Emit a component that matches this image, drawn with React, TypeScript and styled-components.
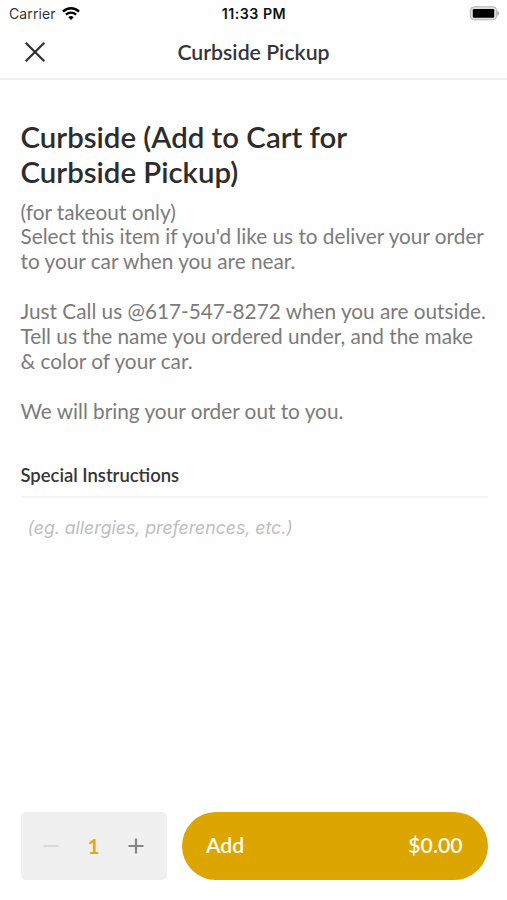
import React, { useState } from "react";
import styled, { createGlobalStyle } from "styled-components";

const GlobalStyle = createGlobalStyle`
  *, *::before, *::after { box-sizing: border-box; }
  body { margin: 0; background: #fff; font-family: Lato, "Liberation Sans", sans-serif; }
  button, textarea { font: inherit; border: 0; padding: 0; margin: 0; background: none; }
`;

const Screen = styled.div`
  width: 100%;
  height: 100vh;
  display: flex;
  flex-direction: column;
  background: #fefefe;
  overflow: hidden;
`;

const StatusBar = styled.div`
  height: 27px;
  flex: none;
  display: grid;
  grid-template-columns: 1fr auto 1fr;
  align-items: center;
  padding: 0 7px 0 9px;
  font-family: Inter, sans-serif;
  color: #111;
`;

const Carrier = styled.div`
  display: flex;
  align-items: center;
  gap: 6px;
  font-size: 14px;
  letter-spacing: 0.1px;
  color: #333;
`;

const Clock = styled.div`
  font-size: 14.2px;
  font-weight: 600;
  letter-spacing: 0.5px;
  margin-right: 1px;
`;

const BatterySlot = styled.div`
  display: flex;
  justify-content: flex-end;
`;

const NavBar = styled.header`
  height: 53px;
  flex: none;
  display: grid;
  grid-template-columns: 70px 1fr 70px;
  align-items: center;
  padding-bottom: 1px;
  border-bottom: 2px solid #efefef;
`;

const CloseButton = styled.button`
  display: flex;
  padding-left: 24px;
`;

const NavTitle = styled.div`
  text-align: center;
  font-size: 21.25px;
  font-weight: 600;
  color: #363636;
`;

const Content = styled.main`
  flex: 1;
  padding: 39px 19px 0 20.5px;
`;

const ItemTitle = styled.h1`
  margin: 0;
  font-size: 29.4px;
  line-height: 35px;
  font-weight: 600;
  color: #2c2c2c;
`;

const Description = styled.p`
  margin: 10.5px 0 0;
  font-size: 20.77px;
  line-height: 24.9px;
  color: #7b7b7b;
  white-space: pre;
`;

const SectionTitle = styled.h2`
  margin: 39px 0 0;
  padding-bottom: 9px;
  font-size: 18.45px;
  line-height: 24px;
  font-weight: 600;
  color: #363636;
  border-bottom: 2px solid #f5f5f5;
`;

const Instructions = styled.textarea`
  display: block;
  width: 100%;
  height: 100px;
  padding: 18px 7px;
  resize: none;
  outline: none;
  font-family: Inter, sans-serif;
  font-style: italic;
  font-size: 17.65px;
  line-height: 24px;
  &::placeholder { color: #bfbfbf; opacity: 1; }
`;

const Footer = styled.footer`
  flex: none;
  height: 107px;
  display: flex;
  gap: 15px;
  padding: 19px 19.5px 19px 20.5px;
  background: #fff;
`;

const Stepper = styled.div`
  width: 146.5px;
  height: 68px;
  display: grid;
  grid-template-columns: 61px 24px 61px;
  align-items: center;
  background: #f0f0f0;
  border-radius: 5px;
`;

const StepButton = styled.button`
  display: flex;
  justify-content: center;
  color: #858585;
  &:disabled { color: #dadada; }
`;

const Quantity = styled.div`
  text-align: center;
  padding-bottom: 2px;
  font-size: 21px;
  font-weight: 700;
  color: #e0a91c;
`;

const AddButton = styled.button`
  flex: 1;
  height: 68px;
  display: flex;
  align-items: center;
  justify-content: space-between;
  padding: 0 25px 2px 24px;
  border-radius: 35px;
  background: #dda500;
  color: #fffcf0;
  font-size: 21.2px;
  font-weight: 600;
`;

const description = `(for takeout only)
Select this item if you'd like us to deliver your order
to your car when you are near.

Just Call us @617-547-8272 when you are outside.
Tell us the name you ordered under, and the make
& color of your car.

We will bring your order out to you.`;

const WifiIcon = () => (
  <svg width="18" height="14" viewBox="0 0 18 14" fill="none" stroke="#000" strokeWidth="2.4">
    <path d="M1 4.6C5.5.2 12.5.2 17 4.6" />
    <path d="M3.9 7.7c2.9-2.8 7.3-2.8 10.2 0" />
    <path d="M6.3 10.2C7.9 8.7 10.1 8.7 11.7 10.2L9 12.9Z" fill="#000" stroke="none" />
  </svg>
);

const BatteryIcon = () => (
  <svg width="31" height="15" viewBox="0 0 31 15">
    <rect x="1.3" y="0.8" width="26.4" height="13" rx="4" fill="#dedede" stroke="#b4b4b4" />
    <rect x="3.8" y="3" width="21.4" height="8.8" rx="1.2" fill="#000" />
    <path d="M28.2 5c2.8 1 2.8 3.6 0 4.6z" fill="#aaa" />
  </svg>
);

const CloseIcon = () => (
  <svg width="22" height="22" viewBox="0 0 22 22" stroke="#303030" strokeWidth="2.2">
    <path d="M1.7 1.7 20.3 20.3M20.3 1.7 1.7 20.3" />
  </svg>
);

const StepIcon = ({ plus = false }: { plus?: boolean }) => (
  <svg width="16" height="16" viewBox="0 0 16 16" stroke="currentColor" strokeWidth="2.2">
    <path d={plus ? "M.5 8h15M8 .5v15" : "M.5 8h15"} />
  </svg>
);

export default function App() {
  const [quantity, setQuantity] = useState(1);
  return (
    <>
      <GlobalStyle />
      <Screen>
        <StatusBar>
          <Carrier>
            Carrier
            <WifiIcon />
          </Carrier>
          <Clock>11:33 PM</Clock>
          <BatterySlot>
            <BatteryIcon />
          </BatterySlot>
        </StatusBar>
        <NavBar>
          <CloseButton aria-label="Close">
            <CloseIcon />
          </CloseButton>
          <NavTitle>Curbside Pickup</NavTitle>
        </NavBar>
        <Content>
          <ItemTitle>
            Curbside (Add to Cart for
            <br />
            Curbside Pickup)
          </ItemTitle>
          <Description>{description}</Description>
          <SectionTitle>Special Instructions</SectionTitle>
          <Instructions placeholder="(eg. allergies, preferences, etc.)" />
        </Content>
        <Footer>
          <Stepper>
            <StepButton
              aria-label="Decrease"
              disabled={quantity === 1}
              onClick={() => setQuantity(quantity - 1)}
            >
              <StepIcon />
            </StepButton>
            <Quantity>{quantity}</Quantity>
            <StepButton aria-label="Increase" onClick={() => setQuantity(quantity + 1)}>
              <StepIcon plus />
            </StepButton>
          </Stepper>
          <AddButton>
            <span>Add</span>
            <span>$0.00</span>
          </AddButton>
        </Footer>
      </Screen>
    </>
  );
}
